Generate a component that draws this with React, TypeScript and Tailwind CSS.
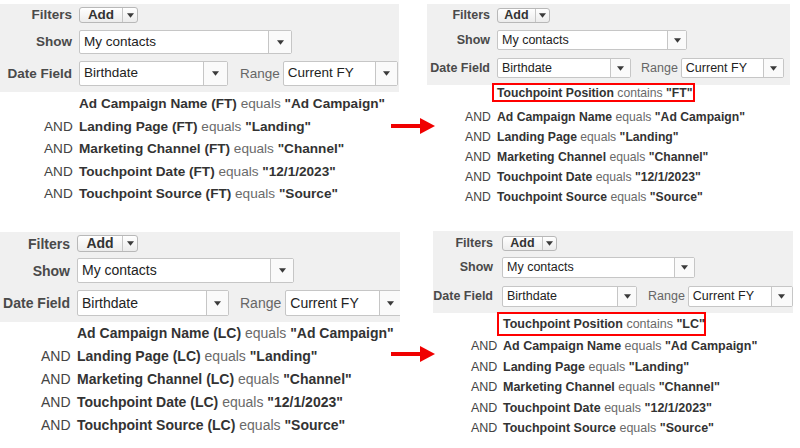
import React from "react";

type Line = { and: boolean; b: string; op: string; v: string };

type Cfg = {
  wrap: string;
  gray: string;
  fs: string;
  labelW: string;
  ml: string;
  add: string;
  addSplit: string;
  row2: string;
  show: string;
  showArrow: string;
  row3: string;
  bd: string;
  bdArrow: string;
  rangeMl: string;
  rangeSel: string;
  rangeSelMl: string;
  rangeArrow: string;
  conds: string;
  condFs: string;
  lead: string;
  andPl: string;
  andW: string;
  box?: string;
  boxText?: string;
  lines: Line[];
  boxLine?: Line;
};

const Caret = () => (
  <svg viewBox="0 0 8 5" className="w-[7px] h-[5px]">
    <path d="M0 0H8L4 5Z" fill="#3a3a3a" />
  </svg>
);

function Select({ cls, arrow, value }: { cls: string; arrow: string; value: string }) {
  return (
    <div className={`flex shrink-0 bg-white border border-[#c6c6c6] rounded-[2px] ${cls}`}>
      <div className="flex-1 flex items-center pl-[4px] text-[#222] whitespace-nowrap overflow-hidden">{value}</div>
      <div className={`flex items-center justify-center border-l border-[#c6c6c6] bg-[#fafafa] ${arrow}`}>
        <Caret />
      </div>
    </div>
  );
}

function AddBtn({ cls, split }: { cls: string; split: string }) {
  return (
    <div className={`flex shrink-0 border border-[#b8b8b8] rounded-[3px] bg-gradient-to-b from-[#ffffff] to-[#ececec] ${cls}`}>
      <div className="flex-1 flex items-center justify-center font-bold text-[#333]">Add</div>
      <div className={`flex items-center justify-center border-l border-[#c6c6c6] ${split}`}>
        <Caret />
      </div>
    </div>
  );
}

function CondText({ l }: { l: Line }) {
  return (
    <span className="whitespace-nowrap">
      <span className="font-bold text-[#333]">{l.b}</span>
      <span className="text-[#6a6a6a]"> {l.op} </span>
      <span className="font-bold text-[#333]">{l.v}</span>
    </span>
  );
}

function Panel({ c }: { c: Cfg }) {
  return (
    <div className={`overflow-hidden ${c.wrap}`}>
      <div className={`bg-[#f0f0f0] ${c.gray} ${c.fs}`}>
        <div className="flex items-center">
          <div className={`${c.labelW} text-right font-bold text-[#4a4a4a] leading-none`}>Filters</div>
          <div className={c.ml}>
            <AddBtn cls={c.add} split={c.addSplit} />
          </div>
        </div>
        <div className={`flex items-center ${c.row2}`}>
          <div className={`${c.labelW} text-right font-bold text-[#4a4a4a] leading-none`}>Show</div>
          <div className={c.ml}>
            <Select cls={c.show} arrow={c.showArrow} value="My contacts" />
          </div>
        </div>
        <div className={`flex items-center ${c.row3}`}>
          <div className={`${c.labelW} text-right font-bold text-[#4a4a4a] leading-none shrink-0`}>Date Field</div>
          <div className={c.ml}>
            <Select cls={c.bd} arrow={c.bdArrow} value="Birthdate" />
          </div>
          <div className={`${c.rangeMl} text-[#666] leading-none`}>Range</div>
          <div className={c.rangeSelMl}>
            <Select cls={c.rangeSel} arrow={c.rangeArrow} value="Current FY" />
          </div>
        </div>
      </div>
      <div className={`${c.conds} ${c.condFs} ${c.lead}`}>
        {c.boxLine && (
          <div className={c.box}>
            <div className={`border-2 border-[#ff0000] ${c.boxText}`}>
              <CondText l={c.boxLine} />
            </div>
          </div>
        )}
        {c.lines.map((l, i) => (
          <div key={i} className={`flex ${c.andPl}`}>
            <span className={`${c.andW} shrink-0 text-[#444]`}>{l.and ? "AND" : ""}</span>
            <CondText l={l} />
          </div>
        ))}
      </div>
    </div>
  );
}

const mk = (suffix: string): Line[] => [
  { and: false, b: `Ad Campaign Name${suffix}`, op: "equals", v: '"Ad Campaign"' },
  { and: true, b: `Landing Page${suffix}`, op: "equals", v: '"Landing"' },
  { and: true, b: `Marketing Channel${suffix}`, op: "equals", v: '"Channel"' },
  { and: true, b: `Touchpoint Date${suffix}`, op: "equals", v: '"12/1/2023"' },
  { and: true, b: `Touchpoint Source${suffix}`, op: "equals", v: '"Source"' },
];

const mkAnd = (): Line[] => mk("").map((l) => ({ ...l, and: true }));

const p1: Cfg = {
  wrap: "pt-[4px]",
  gray: "w-[399px] h-[88px] pt-[3px]",
  fs: "text-[13.5px]",
  labelW: "w-[72px]",
  ml: "ml-[7px]",
  add: "w-[59px] h-[16px]",
  addSplit: "w-[15px]",
  row2: "mt-[7px]",
  show: "w-[213px] h-[24px]",
  showArrow: "w-[23px]",
  row3: "mt-[7px]",
  bd: "w-[149px] h-[25px]",
  bdArrow: "w-[24px]",
  rangeMl: "ml-[12px]",
  rangeSelMl: "ml-[3px]",
  rangeSel: "w-[115px] h-[25px]",
  rangeArrow: "w-[22px]",
  conds: "mt-[1px]",
  condFs: "text-[13.6px]",
  lead: "leading-[22.5px]",
  andPl: "pl-[44px]",
  andW: "w-[35px]",
  lines: mk(" (FT)"),
};

const p2: Cfg = {
  wrap: "pt-[4px]",
  gray: "ml-[27px] w-[363px] h-[81px] pt-[4px]",
  fs: "text-[12.5px]",
  labelW: "w-[63px]",
  ml: "ml-[7px]",
  add: "w-[53px] h-[15px]",
  addSplit: "w-[14px]",
  row2: "mt-[7px]",
  show: "w-[190px] h-[20px]",
  showArrow: "w-[19px]",
  row3: "mt-[8px]",
  bd: "w-[134px] h-[20px]",
  bdArrow: "w-[20px]",
  rangeMl: "ml-[10px]",
  rangeSelMl: "ml-[3px]",
  rangeSel: "w-[103px] h-[20px]",
  rangeArrow: "w-[20px]",
  conds: "-mt-[2px]",
  condFs: "text-[12.2px]",
  lead: "leading-[20px]",
  andPl: "pl-[65px]",
  andW: "w-[32px]",
  box: "pl-[92px] pb-[5px]",
  boxText: "w-[203px] h-[19px] pl-[3px] leading-[15px] pt-[1px]",
  boxLine: { and: false, b: "Touchpoint Position", op: "contains", v: '"FT"' },
  lines: mkAnd(),
};

const p3: Cfg = {
  wrap: "pt-[7px]",
  gray: "w-[400px] h-[90px] pt-[3px]",
  fs: "text-[14px]",
  labelW: "w-[70px]",
  ml: "ml-[7px]",
  add: "w-[61px] h-[17px]",
  addSplit: "w-[15px]",
  row2: "mt-[6px]",
  show: "w-[217px] h-[25px]",
  showArrow: "w-[23px]",
  row3: "mt-[7px]",
  bd: "w-[152px] h-[26px]",
  bdArrow: "w-[22px]",
  rangeMl: "ml-[11px]",
  rangeSelMl: "ml-[4px]",
  rangeSel: "w-[117px] h-[26px]",
  rangeArrow: "w-[22px]",
  conds: "mt-[0px]",
  condFs: "text-[14px]",
  lead: "leading-[23px]",
  andPl: "pl-[41px]",
  andW: "w-[36px]",
  lines: mk(" (LC)"),
};

const p4: Cfg = {
  wrap: "pt-[6px]",
  gray: "ml-[33px] w-[360px] h-[82px] pt-[5px]",
  fs: "text-[12.5px]",
  labelW: "w-[60px]",
  ml: "ml-[9px]",
  add: "w-[55px] h-[15px]",
  addSplit: "w-[14px]",
  row2: "mt-[6px]",
  show: "w-[193px] h-[21px]",
  showArrow: "w-[20px]",
  row3: "mt-[8px]",
  bd: "w-[135px] h-[21px]",
  bdArrow: "w-[19px]",
  rangeMl: "ml-[11px]",
  rangeSelMl: "ml-[3px]",
  rangeSel: "w-[105px] h-[21px]",
  rangeArrow: "w-[21px]",
  conds: "-mt-[1px]",
  condFs: "text-[12.5px]",
  lead: "leading-[20.5px]",
  andPl: "pl-[71px]",
  andW: "w-[32px]",
  box: "pl-[97px]",
  boxText: "w-[209px] h-[24px] pl-[4px] leading-[20px]",
  boxLine: { and: false, b: "Touchpoint Position", op: "contains", v: '"LC"' },
  lines: mkAnd(),
};

function Arrow({ cls }: { cls: string }) {
  return (
    <svg viewBox="0 0 44 16" className={`absolute w-[44px] h-[16px] ${cls}`}>
      <rect x="0" y="6" width="31" height="4" fill="#f00000" />
      <path d="M29 0L44 8L29 16Z" fill="#f00000" />
    </svg>
  );
}

export default function App() {
  return (
    <div className="relative w-[800px] h-[448px] bg-white overflow-hidden font-['Liberation_Sans',Arial,sans-serif]">
      <div className="grid grid-cols-[400px_400px] grid-rows-[225px_223px]">
        <Panel c={p1} />
        <Panel c={p2} />
        <Panel c={p3} />
        <Panel c={p4} />
      </div>
      <Arrow cls="left-[391px] top-[118px]" />
      <Arrow cls="left-[391px] top-[346px]" />
    </div>
  );
}
